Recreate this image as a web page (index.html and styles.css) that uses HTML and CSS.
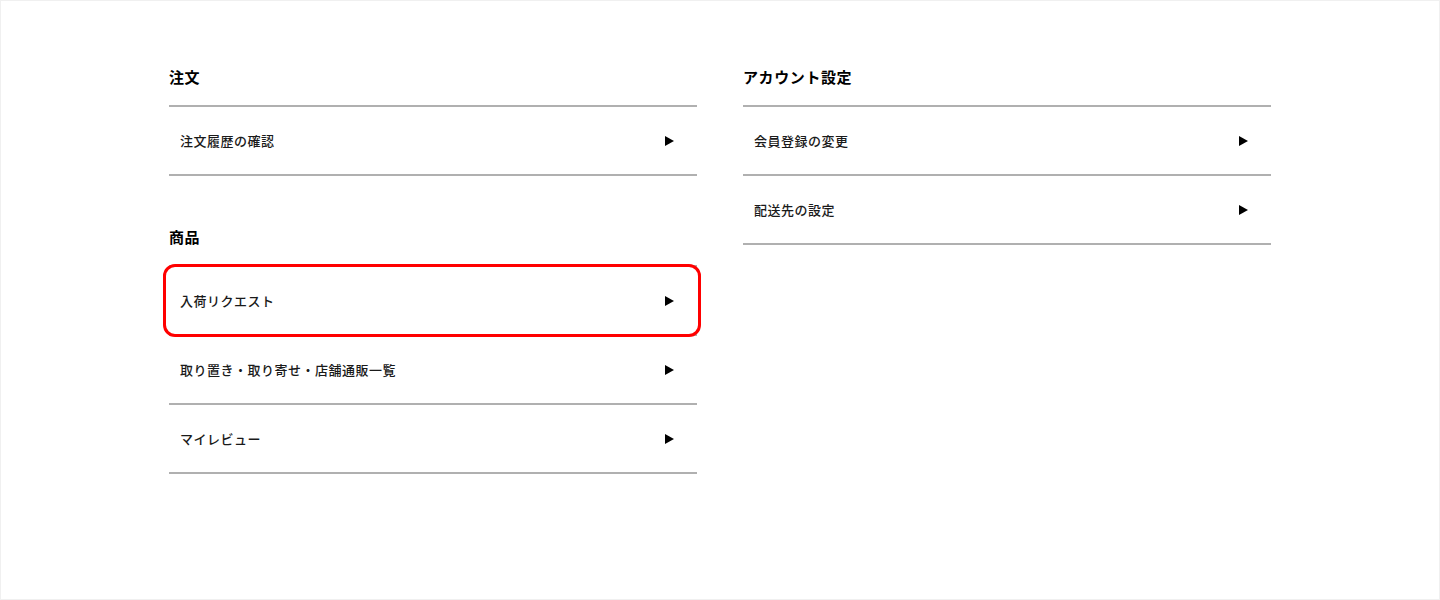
FILE: index.html
```html
<!DOCTYPE html>
<html lang="ja">
<head>
    <meta charset="UTF-8">
    <meta name="viewport" content="width=device-width, initial-scale=1.0">
    <title>マイページ</title>
    <link rel="stylesheet" href="styles.css">
</head>
<body>
    <div class="page">
        <div class="columns">
            <div class="column">
                <section class="menu-section">
                    <h2 class="menu-title">注文</h2>
                    <ul class="menu-list">
                        <li class="menu-item"><a href="#">注文履歴の確認</a></li>
                    </ul>
                </section>
                <section class="menu-section">
                    <h2 class="menu-title">商品</h2>
                    <ul class="menu-list">
                        <li class="menu-item highlight"><a href="#">入荷リクエスト</a></li>
                        <li class="menu-item"><a href="#">取り置き・取り寄せ・店舗通販一覧</a></li>
                        <li class="menu-item"><a href="#">マイレビュー</a></li>
                    </ul>
                </section>
            </div>
            <div class="column">
                <section class="menu-section">
                    <h2 class="menu-title">アカウント設定</h2>
                    <ul class="menu-list">
                        <li class="menu-item"><a href="#">会員登録の変更</a></li>
                        <li class="menu-item"><a href="#">配送先の設定</a></li>
                    </ul>
                </section>
            </div>
        </div>
    </div>
</body>
</html>
```

FILE: styles.css
```css
html, body {
    margin: 0;
    height: 100%;
}
body {
    font-family: "Noto Sans CJK JP", "Noto Sans", sans-serif;
    background-color: #fff;
    color: #111;
}
.page {
    height: 600px;
    box-sizing: border-box;
    border: 1px solid #f0f0f0;
    padding-top: 66px;
}
.columns {
    display: grid;
    grid-template-columns: 528px 528px;
    column-gap: 46px;
    justify-content: center;
}
.menu-section + .menu-section {
    margin-top: 51px;
}
.menu-title {
    margin: 0;
    padding-bottom: 18px;
    font-size: 15px;
    line-height: 20px;
    font-weight: bold;
    letter-spacing: 0.6px;
    color: #000;
}
.menu-list {
    list-style: none;
    margin: 0;
    padding: 0;
    border-top: 2px solid #b0b0b0;
}
.menu-item {
    position: relative;
    border-bottom: 2px solid #b0b0b0;
}
.menu-item a {
    display: flex;
    align-items: center;
    justify-content: space-between;
    height: 67px;
    padding: 0 23px 0 11px;
    font-size: 13px;
    font-weight: 500;
    letter-spacing: 0.5px;
    color: #1a1a1a;
    text-decoration: none;
}
.menu-item a::after {
    content: "";
    width: 0;
    height: 0;
    border-top: 5px solid transparent;
    border-bottom: 5px solid transparent;
    border-left: 9px solid #000;
}
/* 赤枠の注目表示 */
.menu-item.highlight::before {
    content: "";
    position: absolute;
    top: -3px;
    bottom: -3px;
    left: -6px;
    right: -4px;
    border: 3px solid #f00;
    border-radius: 12px;
    pointer-events: none;
}
```
